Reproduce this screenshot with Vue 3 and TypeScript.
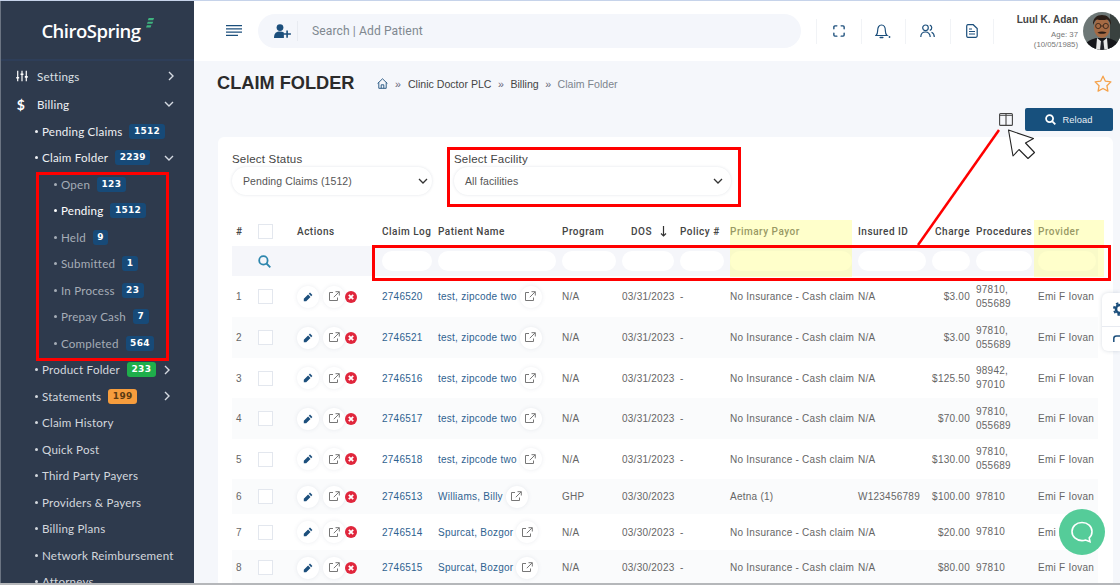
<script setup lang="ts">
interface SubItem { label: string; badge?: string; tone?: string; active?: boolean; chevron?: string }
interface Row {
  id: number; log: string; name: string; program: string; dos: string; policy: string;
  payor: string; insured: string; charge: string; proc: string[]; h: string
}
const topItems: SubItem[] = [
  { label: 'Pending Claims', badge: '1512', tone: 'blue' },
  { label: 'Claim Folder', badge: '2239', tone: 'blue', chevron: 'down' },
]
const subItems: SubItem[] = [
  { label: 'Open', badge: '123' },
  { label: 'Pending', badge: '1512', active: true },
  { label: 'Held', badge: '9' },
  { label: 'Submitted', badge: '1' },
  { label: 'In Process', badge: '23' },
  { label: 'Prepay Cash', badge: '7' },
  { label: 'Completed', badge: '564' },
]
const lowerItems: SubItem[] = [
  { label: 'Product Folder', badge: '233', tone: 'green', chevron: 'right' },
  { label: 'Statements', badge: '199', tone: 'orange', chevron: 'right' },
  { label: 'Claim History' },
  { label: 'Quick Post' },
  { label: 'Third Party Payers' },
  { label: 'Providers & Payers' },
  { label: 'Billing Plans' },
  { label: 'Network Reimbursement' },
  { label: 'Attorneys' },
]
const nc = 'No Insurance - Cash claim'
const rows: Row[] = [
  { id: 1, log: '2746520', name: 'test, zipcode two', program: 'N/A', dos: '03/31/2023', policy: '-', payor: nc, insured: 'N/A', charge: '$3.00', proc: ['97810,', '055689'], h: '41px' },
  { id: 2, log: '2746521', name: 'test, zipcode two', program: 'N/A', dos: '03/31/2023', policy: '-', payor: nc, insured: 'N/A', charge: '$3.00', proc: ['97810,', '055689'], h: '41px' },
  { id: 3, log: '2746516', name: 'test, zipcode two', program: 'N/A', dos: '03/31/2023', policy: '-', payor: nc, insured: 'N/A', charge: '$125.50', proc: ['98942,', '97010'], h: '40px' },
  { id: 4, log: '2746517', name: 'test, zipcode two', program: 'N/A', dos: '03/31/2023', policy: '-', payor: nc, insured: 'N/A', charge: '$70.00', proc: ['97810,', '055689'], h: '41px' },
  { id: 5, log: '2746518', name: 'test, zipcode two', program: 'N/A', dos: '03/31/2023', policy: '-', payor: nc, insured: 'N/A', charge: '$130.00', proc: ['97810,', '055689'], h: '40px' },
  { id: 6, log: '2746513', name: 'Williams, Billy', program: 'GHP', dos: '03/30/2023', policy: '', payor: 'Aetna (1)', insured: 'W123456789', charge: '$100.00', proc: ['97810'], h: '35px' },
  { id: 7, log: '2746514', name: 'Spurcat, Bozgor', program: 'N/A', dos: '03/30/2023', policy: '-', payor: nc, insured: 'N/A', charge: '$20.00', proc: ['97810'], h: '36px' },
  { id: 8, log: '2746515', name: 'Spurcat, Bozgor', program: 'N/A', dos: '03/30/2023', policy: '-', payor: nc, insured: 'N/A', charge: '$80.00', proc: ['97810'], h: '35px' },
]
const filterCols = ['claim', 'patient', 'program', 'dos', 'policy', 'payor', 'insured', 'charge', 'procedures', 'provider']
</script>

<template>
  <div class="app">
    <aside class="sidebar">
      <div class="logo">
        <span class="logo-text">ChiroSpring</span>
        <svg class="logo-mark" width="9" height="10" viewBox="0 0 10 11"><path d="M3 0h6L8 2.400H2zM2 4h6L7 6.400H1zM1 8h5L5 10.600H0z" fill="#3fb37f"/></svg>
      </div>
      <nav class="nav">
        <div class="nav-row main">
          <svg class="nav-icon" width="12" height="12" viewBox="0 0 14 14" fill="none" stroke="#fff" stroke-width="1.400"><path d="M2 1v12M7 1v12M12 1v12"/><path d="M.3 9h3.400M5.300 5h3.400M10.300 8h3.400" stroke-width="1.800"/></svg>
          <span>Settings</span>
          <svg class="chev r" width="8" height="10" viewBox="0 0 8 10" fill="none" stroke="#d5dae2" stroke-width="1.400"><path d="M2 1l4 4-4 4"/></svg>
        </div>
        <div class="nav-row main">
          <span class="nav-icon dollar">$</span>
          <span class="white">Billing</span>
          <svg class="chev" width="10" height="8" viewBox="0 0 10 8" fill="none" stroke="#d5dae2" stroke-width="1.400"><path d="M1 2l4 4 4-4"/></svg>
        </div>
        <div v-for="it in topItems" :key="it.label" class="nav-row lvl1 white">
          <i class="dot"></i><span>{{ it.label }}</span>
          <b class="badge" :class="it.tone">{{ it.badge }}</b>
          <svg v-if="it.chevron" class="chev" width="10" height="8" viewBox="0 0 10 8" fill="none" stroke="#d5dae2" stroke-width="1.400"><path d="M1 2l4 4 4-4"/></svg>
        </div>
        <div v-for="it in subItems" :key="it.label" class="nav-row lvl2" :class="{ active: it.active }">
          <i class="dot"></i><span>{{ it.label }}</span>
          <b class="badge blue">{{ it.badge }}</b>
        </div>
        <div v-for="it in lowerItems" :key="it.label" class="nav-row lvl1">
          <i class="dot"></i><span>{{ it.label }}</span>
          <b v-if="it.badge" class="badge" :class="it.tone">{{ it.badge }}</b>
          <svg v-if="it.chevron" class="chev r" width="8" height="10" viewBox="0 0 8 10" fill="none" stroke="#d5dae2" stroke-width="1.400"><path d="M2 1l4 4-4 4"/></svg>
        </div>
      </nav>
    </aside>

    <div class="main-col">
      <header class="topbar">
        <svg class="burger" width="16" height="12" viewBox="0 0 16 12" stroke="#1c4f7c" stroke-width="1.300"><path d="M0 .7h16M0 3.900h16M0 7.100h16M0 10.300h12"/></svg>
        <div class="search">
          <svg width="17" height="14" viewBox="0 0 17 14" fill="#1c4f7c"><circle cx="6" cy="3.600" r="3.400"/><path d="M0 14c0-5 2.500-6.400 6-6.400 1.600 0 2.900.3 3.900 1V14z"/><path d="M12.300 6.500h1.600v2.700h3v1.600h-3v3h-1.600v-3h-3V9.200h3z"/></svg>
          <i class="search-sep"></i>
          <span class="search-text">Search | Add Patient</span>
        </div>
        <div class="tool">
          <svg width="12" height="12" viewBox="0 0 14 14" fill="none" stroke="#1c4f7c" stroke-width="1.600" stroke-linecap="round"><path d="M1 4.500V2.200A1.200 1.200 0 0 1 2.200 1H4.500M9.500 1h2.300A1.200 1.200 0 0 1 13 2.200V4.500M13 9.500v2.300A1.200 1.200 0 0 1 11.800 13H9.500M4.500 13H2.200A1.200 1.200 0 0 1 1 11.800V9.500"/></svg>
        </div>
        <div class="tool">
          <svg width="16" height="15" viewBox="0 0 16 15" fill="none" stroke="#1c4f7c" stroke-width="1.200"><path d="M1 11.500c1.300-1 1.600-2.200 1.600-4.500C2.600 3.500 4 1 6.500 1s3.900 2.500 3.900 6c0 2.300.3 3.500 1.600 4.500z"/><path d="M5.200 13.500h2.600" stroke-width="1.500" stroke-linecap="round"/><circle cx="14.500" cy="13" r=".9" fill="#1c4f7c" stroke="none"/></svg>
        </div>
        <div class="tool">
          <svg width="15" height="14" viewBox="0 0 15 14" fill="none" stroke="#1c4f7c" stroke-width="1.200"><circle cx="5.500" cy="3.800" r="2.800"/><path d="M.8 13c0-3.200 2-5 4.700-5s4.700 1.800 4.700 5"/><path d="M9.800 1.200a2.700 2.700 0 0 1 0 5.200M11.500 8.300c1.700.6 2.800 2.300 2.800 4.700"/></svg>
        </div>
        <div class="tool last">
          <svg width="12" height="14" viewBox="0 0 12 14" fill="none" stroke="#1c4f7c" stroke-width="1.200"><path d="M1.800.7h5.400l4 3.800v7.200a1.500 1.500 0 0 1-1.500 1.600H1.800A1.500 1.500 0 0 1 .7 11.700V2.200A1.500 1.500 0 0 1 1.800.7z"/><path d="M3 5h3M3 7.500h6M3 10h6"/></svg>
        </div>
        <div class="user">
          <div class="user-text">
            <div class="user-name">Luul K. Adan</div>
            <div class="user-meta">Age: 37</div>
            <div class="user-meta">(10/05/1985)</div>
          </div>
          <svg class="avatar" width="38" height="38" viewBox="0 0 38 38">
            <clipPath id="av"><circle cx="19" cy="19" r="19"/></clipPath>
            <g clip-path="url(#av)">
              <rect width="38" height="38" fill="#6d7776"/>
              <rect x="27" width="11" height="38" fill="#39413f"/>
              <path d="M0 38c1-8 7-10 13-12h12c6 2 12 4 13 12z" fill="#15161a"/>
              <path d="M14 26l5 4 5-4 1 12H13z" fill="#e8e8e8"/>
              <path d="M18 29h2.400l1 9h-4.400z" fill="#23252b"/>
              <ellipse cx="19" cy="15.500" rx="8" ry="10.500" fill="#a56a44"/>
              <path d="M10 13c-.5-7 4-10 9-10s9.500 3 9 10c-1.500-3-2-5-4-5.500-3 .8-7 .8-10 0-2 .5-2.500 2.500-4 5.500z" fill="#2a1c15"/>
              <circle cx="15.200" cy="14" r="2.600" fill="none" stroke="#2b1e17" stroke-width=".8"/>
              <circle cx="22.800" cy="14" r="2.600" fill="none" stroke="#2b1e17" stroke-width=".8"/>
              <path d="M17.800 14h2.400" stroke="#2b1e17" stroke-width=".8"/>
              <path d="M14.500 20.500c2.500-1.300 6.500-1.300 9 0-.8 1.800-8.200 1.800-9 0z" fill="#2a1c15"/>
            </g>
          </svg>
        </div>
      </header>

      <main class="content">
        <div class="title-row">
          <h1>CLAIM FOLDER</h1>
          <div class="crumbs">
            <svg width="11" height="11" viewBox="0 0 11 11" fill="none" stroke="#1c4f7c" stroke-width=".9"><path d="M.6 5.500L5.500.8l4.900 4.700M1.800 4.500v5.800h7.400V4.500M4.200 10.300V6.800h2.600v3.500"/></svg>
            <span class="sep first">»</span><span>Clinic Doctor PLC</span>
            <span class="sep">»</span><span>Billing</span>
            <span class="sep">»</span><span class="cur">Claim Folder</span>
          </div>
          <svg class="star" width="18" height="18" viewBox="0 0 18 18" fill="none" stroke="#f5a24a" stroke-width="1.300" stroke-linejoin="round"><path d="M9 1.200l2.400 5 5.500.7-4 3.800 1 5.400L9 13.500l-4.900 2.600 1-5.400-4-3.800 5.500-.7z"/></svg>
        </div>
        <div class="toolbar">
          <svg width="14" height="13" viewBox="0 0 14 13" fill="none" stroke="#444" stroke-width="1.100"><rect x=".6" y=".6" width="12.800" height="11.800" rx="1"/><path d="M7 .6v11.800"/><path d="M.6 2.500h12.800" stroke-width=".8"/></svg>
          <button class="reload">
            <svg width="11" height="11" viewBox="0 0 11 11" fill="none" stroke="#fff" stroke-width="1.800"><circle cx="4.600" cy="4.600" r="3.500"/><path d="M7.300 7.300l3 3"/></svg>
            Reload
          </button>
        </div>

        <section class="card">
          <div class="filters">
            <label class="field status">
              <span>Select Status</span>
              <div class="select">Pending Claims (1512)<svg width="10" height="7" viewBox="0 0 10 7" fill="none" stroke="#333" stroke-width="1.300"><path d="M1 1l4 4 4-4"/></svg></div>
            </label>
            <label class="field facility">
              <span>Select Facility</span>
              <div class="select">All facilities<svg width="10" height="7" viewBox="0 0 10 7" fill="none" stroke="#333" stroke-width="1.300"><path d="M1 1l4 4 4-4"/></svg></div>
            </label>
          </div>

          <div class="table">
            <div class="grid head">
              <div>#</div>
              <div><i class="check"></i></div>
              <div class="pl">Actions</div>
              <div>Claim Log</div>
              <div>Patient Name</div>
              <div>Program</div>
              <div class="dos-h">DOS
                <svg width="7" height="11" viewBox="0 0 7 11" fill="none" stroke="#333" stroke-width="1.200"><path d="M3.500 0v10M1 7.500l2.500 2.500L6 7.500"/></svg>
              </div>
              <div>Policy #</div>
              <div>Primary Payor</div>
              <div>Insured ID</div>
              <div class="right">Charge</div>
              <div>Procedures</div>
              <div>Provider</div>
            </div>
            <div class="grid filter-row">
              <div></div>
              <div class="search-cell">
                <svg width="13" height="13" viewBox="0 0 13 13" fill="none" stroke="#2d86ad" stroke-width="1.800"><circle cx="5.400" cy="5.400" r="4.200"/><path d="M8.500 8.500l3.800 3.800"/></svg>
              </div>
              <div></div>
              <div v-for="c in filterCols" :key="c"><i class="fi"></i></div>
            </div>
            <div v-for="r in rows" :key="r.id" class="grid body" :class="{ odd: r.id % 2 === 0 }" :style="{ height: r.h }">
              <div>{{ r.id }}</div>
              <div><i class="check"></i></div>
              <div class="actions">
                <span class="round">
                  <svg width="10" height="10" viewBox="0 0 10 10" fill="#1c4f7c"><path d="M7 .6l2.400 2.400-1.200 1.200L5.800 1.800zM5.100 2.500l2.400 2.400-4.300 4.300H.8V6.800z"/></svg>
                </span>
                <span class="round">
                  <svg width="11" height="11" viewBox="0 0 11 11" fill="none" stroke="#777" stroke-width="1"><path d="M8.500 6.500v3h-8v-8h3.500"/><path d="M6.500.7h3.800v3.800M10.200.8L4.800 6.200"/></svg>
                </span>
                <svg class="x" width="12" height="12" viewBox="0 0 12 12"><circle cx="6" cy="6" r="6" fill="#e0263c"/><path d="M3.800 3.800l4.400 4.400M8.200 3.800L3.800 8.200" stroke="#fff" stroke-width="1.800"/></svg>
              </div>
              <div class="link">{{ r.log }}</div>
              <div class="patient">
                <span class="link">{{ r.name }}</span>
                <span class="round">
                  <svg width="11" height="11" viewBox="0 0 11 11" fill="none" stroke="#777" stroke-width="1"><path d="M8.500 6.500v3h-8v-8h3.500"/><path d="M6.500.7h3.800v3.800M10.200.8L4.800 6.200"/></svg>
                </span>
              </div>
              <div>{{ r.program }}</div>
              <div>{{ r.dos }}</div>
              <div>{{ r.policy }}</div>
              <div class="nowrap">{{ r.payor }}</div>
              <div>{{ r.insured }}</div>
              <div class="right">{{ r.charge }}</div>
              <div class="proc"><span v-for="p in r.proc" :key="p">{{ p }}</span></div>
              <div class="nowrap">Emi F Iovan</div>
            </div>
          </div>
        </section>
      </main>
    </div>

    <!-- annotations drawn over the screenshot -->
    <i class="hl hl-payor"></i>
    <i class="hl hl-provider"></i>
    <i class="box box-nav"></i>
    <i class="box box-facility"></i>
    <i class="box box-filter"></i>
    <svg class="annot" width="1120" height="588" viewBox="0 0 1120 588" fill="none">
      <path d="M999 130L918 245" stroke="#f00" stroke-width="2.500"/>
      <path d="M1008.500 130l4.500 26 6-6.500 9 9 6.500-6-9-9.500 8-4.500z" fill="#fff" stroke="#222" stroke-width="1.100" stroke-linejoin="round"/>
    </svg>

    <div class="side-tab">
      <svg class="gear" width="16" height="16" viewBox="0 0 16 16" fill="none" stroke="#1c4f7c"><circle cx="8" cy="8" r="4" stroke-width="2.600"/><circle cx="8" cy="8" r="6" stroke-width="2" stroke-dasharray="2.400 2.300"/></svg>
      <i class="tab-sep"></i>
      <svg class="tab-arc" width="8" height="8" viewBox="0 0 8 8" fill="none" stroke="#1c4f7c" stroke-width="1.500"><path d="M.8 7V3.500C.8 2 2 1 3.500 1H8"/></svg>
    </div>
    <button class="chat" aria-label="Chat">
      <svg width="26" height="25" viewBox="0 0 26 25" fill="none" stroke="#fff" stroke-width="1.600"><path d="M13 2.500c5.800 0 10 3.900 10 9 0 2.500-1 4.800-2.800 6.300l.8 4-4.400-1.800c-1.100.4-2.300.6-3.600.6-5.800 0-10-4-10-9.100s4.200-9 10-9z"/></svg>
    </button>
  </div>
</template>

<style>
html, body { margin: 0; background: #fff; }
</style>

<style scoped>
.app {
  position: relative; display: flex; width: 1120px; height: 585px; overflow: hidden;
  border-top: 1px solid #c6d3ea; border-bottom: 2px solid #b5b7ba;
  font-family: "Liberation Sans", Arial, sans-serif; color: #666; box-sizing: border-box; background: #f5f7fb;
}
/* Sidebar */
.sidebar { width: 194px; flex: none; background: #2e3a4d; border-left: 1px solid #6b7482; box-sizing: border-box; font-family: Lato, "Noto Sans", sans-serif; }
.logo { height: 60px; border-bottom: 2px solid #2e3e59; display: flex; justify-content: center; align-items: center; position: relative; box-sizing: border-box; padding-right: 13px; }
.logo-text { font-family: "Open Sans", sans-serif; font-weight: 600; font-size: 18.500px; letter-spacing: -.5px; color: #fff; }
.logo-mark { position: absolute; left: 145px; top: 17px; }
.nav { padding-top: 1px; }
.nav-row { height: 26.500px; display: flex; align-items: center; font-size: 11.600px; letter-spacing: .2px; color: #d3d7dd; white-space: nowrap; font-weight: 400; position: relative; }
.nav-row.main { padding-left: 15px; height: 28px; color: #dde0e5; }
.nav-icon { width: 12px; margin-right: 9px; flex: none; }
.dollar { color: #fff; font-size: 14px; font-weight: 700; text-align: center; margin-left: -1px; margin-right: 10px; }
.white { color: #eef0f3; }
.lvl1 { padding-left: 34px; }
.lvl2 { padding-left: 53px; color: #a6adb7; }
.lvl2.active { color: #fff; }
.dot { width: 3px; height: 3px; border-radius: 50%; background: currentColor; margin-right: 4px; flex: none; }
.badge { margin-left: 7px; padding: 0 4.500px; height: 15px; line-height: 15px; border-radius: 3px; font-size: 9px; letter-spacing: .3px; font-family: "DejaVu Sans", sans-serif; color: #fff; font-weight: 700; background: #174a78; }
.badge.green { background: #1fae4b; }
.badge.orange { background: #f79d3d; color: #5b3a12; }
.chev { position: absolute; left: 163px; }
.chev.r { left: 166px; }
.lvl1 .chev.r { left: 162px; }
/* Topbar */
.main-col { flex: 1; min-width: 0; display: flex; flex-direction: column; }
.topbar { height: 60px; flex: none; background: #fff; display: flex; align-items: center; padding-left: 32px; box-sizing: border-box; }
.burger { flex: none; margin-right: 16px; }
.search { width: 543px; height: 34px; border-radius: 17px; background: #f4f6fb; display: flex; align-items: center; padding-left: 16px; box-sizing: border-box; margin-right: 15px; flex: none; }
.search-sep { width: 1px; height: 20px; background: #e8ebf1; margin: 0 14px 0 6px; }
.search-text { font-family: Roboto, sans-serif; font-size: 12.100px; color: #808890; letter-spacing: .1px; }
.tool { width: 44.500px; height: 25px; flex: none; display: flex; align-items: center; justify-content: center; border-left: 1px solid #f1f3f6; box-sizing: border-box; }
.tool.last { border-right: 1px solid #f1f3f6; }
.user { flex: 1; display: flex; justify-content: flex-end; align-items: center; gap: 5px; margin-right: -1px; }
.user-text { text-align: right; }
.user-name { font-size: 10px; font-weight: 700; color: #444; line-height: 14px; margin-bottom: 3px; }
.user-meta { font-size: 7.800px; color: #777; line-height: 9.500px; }
.avatar { flex: none; display: block; }
/* Content */
.content { flex: 1; padding: 0 7px 0 23px; min-height: 0; }
.title-row { display: flex; align-items: center; height: 27px; margin-top: 9px; }
h1 { margin: 0; font-size: 18.200px; font-weight: 700; color: #2b2b2b; width: 160px; flex: none; letter-spacing: 0; }
.crumbs { display: flex; align-items: center; font-size: 10.600px; color: #444; flex: 1; }
.crumbs .sep { margin: 0 6.500px; color: #667; }
.crumbs .sep.first { margin-left: 7px; margin-right: 7px; }
.crumbs .cur { color: #7d858e; }
.star { margin: 1px 1px 0 0; }
.toolbar { display: flex; justify-content: flex-end; align-items: center; gap: 12px; margin-top: 11px; height: 23px; }
.reload { width: 88px; height: 23px; border: 0; border-radius: 2px; background: #17507d; color: #e8eef4; font: 9.300px "Liberation Sans", sans-serif; display: flex; align-items: center; justify-content: center; gap: 6px; letter-spacing: .1px; }
.card { margin-top: 6px; margin-left: 1px; background: #fff; border-radius: 6px; padding: 15px 15px 0 14px; height: 460px; box-sizing: border-box; overflow: hidden; }
.filters { display: flex; height: 43px; }
.field { display: block; font-size: 11.500px; color: #444; letter-spacing: .2px; }
.field span { display: block; line-height: 15px; }
.status { width: 222px; }
.facility { width: 277px; }
.select { height: 28px; border-radius: 14px; background: #fff; box-shadow: 0 0 3px rgba(60, 80, 110, .16); display: flex; align-items: center; justify-content: space-between; padding: 0 8px 0 11px; font-size: 10.500px; letter-spacing: .1px; color: #555; }
.status .select { width: 200px; box-sizing: border-box; padding-right: 4px; }
/* Table */
.table { margin-top: 23px; font-size: 10px; letter-spacing: .25px; }
.grid { display: grid; grid-template-columns: 22px 36px 88px 56px 124px 60px 58px 50px 128px 74px 44px 62px 64px; align-items: center; }
.grid > div { padding-left: 4px; min-width: 0; box-sizing: border-box; }
.head { height: 28px; padding-bottom: 2px; box-sizing: border-box; font-family: Roboto, sans-serif; font-weight: 500; color: #444; font-size: 10px; letter-spacing: .5px; white-space: nowrap; }
.head .pl { padding-left: 7px; }
.dos-h { display: flex; align-items: center; gap: 8px; padding-left: 13px !important; }
.right { text-align: right; padding-left: 0 !important; padding-right: 2px; }
.filter-row { height: 30px; background: #f5f6fa; }
.filter-row > div { padding-right: 2px; }
.search-cell { display: flex; align-items: center; }
.fi { display: block; height: 20px; border-radius: 10px; background: #fff; }
.check { display: block; width: 15px; height: 15px; background: #fff; border: 1px solid #e3e7ee; box-sizing: border-box; }
.body.odd { background: #fafbfc; }
.actions { display: flex; align-items: center; padding-left: 7px !important; }
.round { width: 22px; height: 22px; flex: none; display: inline-flex; align-items: center; justify-content: center; border-radius: 50%; background: #fff; box-shadow: 0 0 4px rgba(60, 80, 110, .1); margin-right: 4px; }
.x { margin-left: -4px; }
.link { color: #2f6290; white-space: nowrap; }
.patient { display: flex; align-items: center; gap: 3px; }
.nowrap { white-space: nowrap; }
.proc span { display: block; line-height: 14px; }
/* Annotation overlays */
.hl { position: absolute; background: rgba(255, 255, 140, .45); top: 219px; height: 57px; }
.hl-payor { left: 730px; width: 122px; }
.hl-provider { left: 1034px; width: 70px; }
.box { position: absolute; border: 3px solid #f00; box-sizing: border-box; }
.box-nav { left: 36px; top: 171px; width: 133px; height: 189px; }
.box-facility { left: 447px; top: 146px; width: 294px; height: 60px; }
.box-filter { left: 372px; top: 244px; width: 739px; height: 36px; }
.annot { position: absolute; left: 0; top: -1px; pointer-events: none; }
.side-tab { position: absolute; left: 1102px; top: 292px; width: 18px; height: 58px; overflow: hidden; background: #fff; border-radius: 6px 0 0 6px; box-shadow: 0 0 4px rgba(60, 80, 110, .2); display: flex; flex-direction: column; align-items: flex-start; justify-content: space-evenly; }
.gear { margin-left: 10px; flex: none; }
.tab-arc { margin-left: 11px; flex: none; }
.tab-sep { width: 100%; height: 1px; background: #e8ebf1; }
.chat { position: absolute; left: 1059px; top: 508px; width: 46px; height: 46px; padding: 0; border: 0; border-radius: 50%; background: #55cc99; display: flex; align-items: center; justify-content: center; }
</style>
